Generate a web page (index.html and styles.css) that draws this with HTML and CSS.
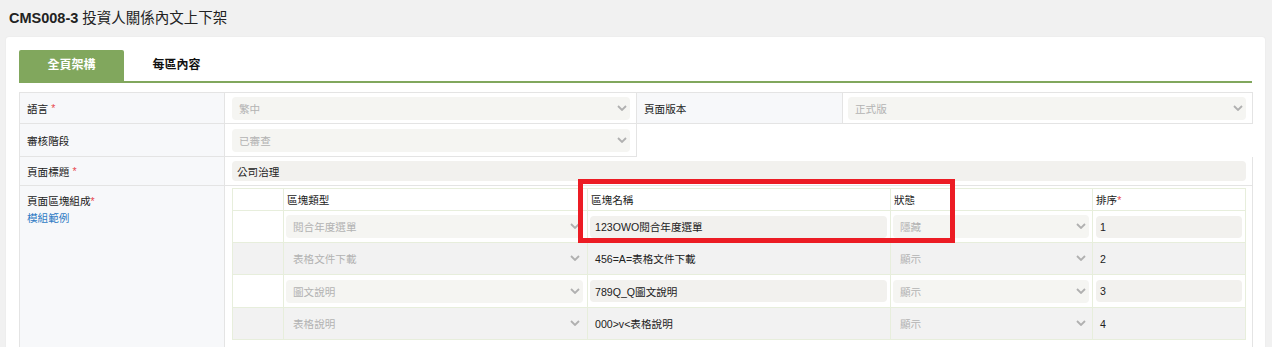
FILE: index.html
```html
<!DOCTYPE html>
<html lang="zh-Hant">
<head>
<meta charset="utf-8">
<title>CMS008-3</title>
<link rel="stylesheet" href="styles.css">
</head>
<body>
<header class="page-head"><b class="code">CMS008-3</b> 投資人關係內文上下架</header>
<main class="card">
  <nav class="tabs">
    <div class="tab active">全頁架構</div>
    <div class="tab">每區內容</div>
  </nav>
  <div class="form">
    <div class="lbl r1"><span>語言</span><span class="req sp">*</span></div>
    <div class="val r1 pl7"><div class="sel w398"><span class="ph">繁中</span><svg class="chev" width="10" height="6" viewBox="0 0 10 6"><path d="M1 1L5 5L9 1" /></svg></div></div>
    <div class="lbl r1">頁面版本</div>
    <div class="val r1 pl5"><div class="sel w398"><span class="ph">正式版</span><svg class="chev" width="10" height="6" viewBox="0 0 10 6"><path d="M1 1L5 5L9 1" /></svg></div></div>

    <div class="lbl r2">審核階段</div>
    <div class="val r2 pl7"><div class="sel w398"><span class="ph">已審查</span><svg class="chev" width="10" height="6" viewBox="0 0 10 6"><path d="M1 1L5 5L9 1" /></svg></div></div>
    <div class="blank r2"></div>

    <div class="lbl r3"><span>頁面標題</span><span class="req sp">*</span></div>
    <div class="val r3 pl7 span3"><div class="inp wfull">公司治理</div></div>

    <div class="lbl r4 top">
      <div>頁面區塊組成<span class="req">*</span></div>
      <a class="link" href="#">模組範例</a>
    </div>
    <div class="val r4 span3 blocks-cell">
      <div class="blocks-wrap">
        <div class="blocks">
          <div class="bh"></div>
          <div class="bh">區塊類型</div>
          <div class="bh">區塊名稱</div>
          <div class="bh">狀態</div>
          <div class="bh">排序<span class="req">*</span></div>

          <div class="bc"></div>
          <div class="bc"><div class="sel ws1"><span class="ph">閱合年度選單</span><svg class="chev" width="10" height="6" viewBox="0 0 10 6"><path d="M1 1L5 5L9 1" /></svg></div></div>
          <div class="bc"><div class="inp wi2">123OWO閱合年度選單</div></div>
          <div class="bc"><div class="sel ws3"><span class="ph">隱藏</span><svg class="chev" width="10" height="6" viewBox="0 0 10 6"><path d="M1 1L5 5L9 1" /></svg></div></div>
          <div class="bc c4"><div class="inp wi4">1</div></div>

          <div class="bc alt"></div>
          <div class="bc alt"><div class="sel ws1"><span class="ph">表格文件下載</span><svg class="chev" width="10" height="6" viewBox="0 0 10 6"><path d="M1 1L5 5L9 1" /></svg></div></div>
          <div class="bc alt"><div class="inp wi2">456=A=表格文件下載</div></div>
          <div class="bc alt"><div class="sel ws3"><span class="ph">顯示</span><svg class="chev" width="10" height="6" viewBox="0 0 10 6"><path d="M1 1L5 5L9 1" /></svg></div></div>
          <div class="bc alt c4"><div class="inp wi4">2</div></div>

          <div class="bc tall"></div>
          <div class="bc tall"><div class="sel ws1"><span class="ph">圖文說明</span><svg class="chev" width="10" height="6" viewBox="0 0 10 6"><path d="M1 1L5 5L9 1" /></svg></div></div>
          <div class="bc tall"><div class="inp wi2">789Q_Q圖文說明</div></div>
          <div class="bc tall"><div class="sel ws3"><span class="ph">顯示</span><svg class="chev" width="10" height="6" viewBox="0 0 10 6"><path d="M1 1L5 5L9 1" /></svg></div></div>
          <div class="bc tall c4"><div class="inp wi4">3</div></div>

          <div class="bc alt"></div>
          <div class="bc alt"><div class="sel ws1"><span class="ph">表格說明</span><svg class="chev" width="10" height="6" viewBox="0 0 10 6"><path d="M1 1L5 5L9 1" /></svg></div></div>
          <div class="bc alt"><div class="inp wi2">000&gt;v&lt;表格說明</div></div>
          <div class="bc alt"><div class="sel ws3"><span class="ph">顯示</span><svg class="chev" width="10" height="6" viewBox="0 0 10 6"><path d="M1 1L5 5L9 1" /></svg></div></div>
          <div class="bc alt c4"><div class="inp wi4">4</div></div>
        </div>
        <div class="highlight"></div>
      </div>
    </div>
  </div>
</main>
</body>
</html>
```
FILE: styles.css
```css
* { box-sizing: border-box; }
html, body { margin: 0; padding: 0; }
body {
  background: #f1f1f1;
  font-family: "Liberation Sans", "Noto Sans CJK TC", sans-serif;
  font-size: 10.6px;
  color: #333;
  height: 347px;
  overflow: hidden;
}
.page-head {
  height: 37px;
  line-height: 37px;
  padding-left: 9px;
  font-size: 14.5px;
  color: #222;
}
.page-head .code { font-weight: bold; }
.card {
  margin-left: 6px;
  width: 1259px;
  background: #fff;
  border-radius: 3px;
  padding: 13px 13px 20px 13px;
  box-shadow: 0 0 2px rgba(0,0,0,0.06);
  min-height: 400px;
}
.tabs {
  display: flex;
  height: 33px;
  border-bottom: 2px solid #81a75d;
}
.tab {
  width: 105px;
  height: 31px;
  line-height: 31px;
  text-align: center;
  font-size: 12px;
  font-weight: bold;
  color: #111;
  border-radius: 2px 2px 0 0;
}
.tab.active { background: #81a75d; color: #fff; }

.form {
  margin-top: 9px;
  display: grid;
  grid-template-columns: 205px 412px 206px 410px;
  border-top: 1px solid #e4e4e4;
  border-left: 1px solid #e4e4e4;
  width: 1234px;
}
.lbl, .val {
  border-right: 1px solid #e4e4e4;
  border-bottom: 1px solid #e4e4e4;
  display: flex;
  align-items: center;
}
.lbl {
  background: #f7f8fa;
  padding-left: 7px;
  color: #222;
}
.lbl.top {
  flex-direction: column;
  align-items: flex-start;
  justify-content: flex-start;
  padding-top: 7px;
  line-height: 17px;
}
.r1 { height: 31px; }
.r2 { height: 33px; }
.r3 { height: 29px; }
.r4 { min-height: 200px; }
.pl7 { padding-left: 7px; }
.pl5 { padding-left: 5px; }
.span3 { grid-column: span 3; }
.blank { grid-column: span 2; }
.req { color: #e8474d; }
.req.sp { margin-left: 3px; }
.link { color: #2f7bc4; text-decoration: none; }

.sel {
  position: relative;
  height: 23px;
  background: #f5f5f2;
  border-radius: 4px;
  display: flex;
  align-items: center;
  padding-left: 7px;
}
.sel .ph { color: #b3b3b3; }
.chev {
  position: absolute;
  right: 3px;
  top: 8px;
}
.chev path { fill: none; stroke: #b0b0b0; stroke-width: 1.8; }
.inp {
  height: 20px;
  background: #f2f1ee;
  border-radius: 4px;
  display: flex;
  align-items: center;
  padding-left: 5px;
  color: #222;
}
.w398 { width: 398px; }
.wfull { width: 1014px; }

.blocks-cell {
  align-items: flex-start;
  padding: 2px 0 0 7px;
}
.blocks-wrap { position: relative; }
.blocks {
  display: grid;
  grid-template-columns: 51px 304px 303px 202px 153px;
  width: 1014px;
  border-top: 1px solid #e7eedc;
  border-left: 1px solid #e7eedc;
}
.bh, .bc {
  border-right: 1px solid #e7eedc;
  border-bottom: 1px solid #e7eedc;
  display: flex;
  align-items: center;
  padding-left: 2px;
}
.bh { height: 22px; padding-left: 3px; color: #222; }
.bc { height: 32px; }
.bc.tall { height: 33px; }
.bc.c4 { padding-left: 3px; }
.bc.alt { background: #f2f2f2; }
.bc.alt .sel, .bc.alt .inp { background: #f2f2f2; }
.ws1 { width: 297px; }
.ws3 { width: 196px; }
.wi2 { width: 297px; height: 22px; }
.wi4 { width: 146px; height: 22px; padding-left: 4px; }

.highlight {
  position: absolute;
  left: 346px;
  top: -9px;
  width: 377px;
  height: 64px;
  border: 5px solid #ec1c24;
  pointer-events: none;
}
```
